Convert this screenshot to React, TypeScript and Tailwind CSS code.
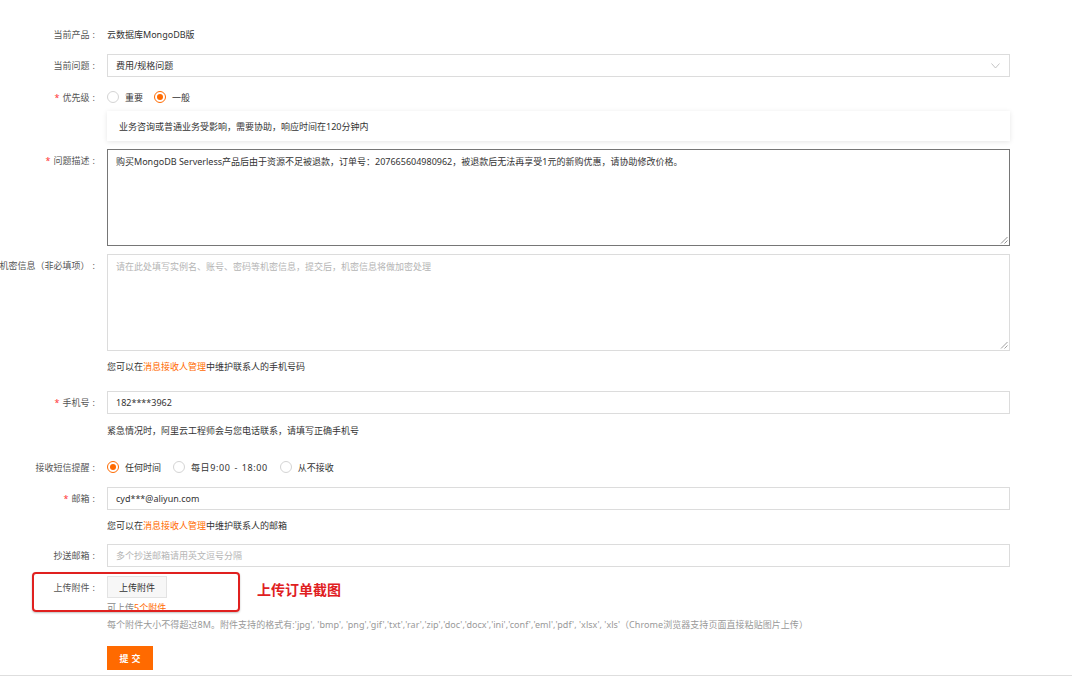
import React from "react";

const FONT = { fontFamily: '"Noto Sans", "Noto Sans CJK SC", sans-serif' };

function Label({ text, required, top }: { text: string; required?: boolean; top?: boolean }) {
  return (
    <div
      className={`w-[95px] shrink-0 flex justify-end whitespace-nowrap text-[9px] text-[#555] ${
        top ? "items-start pt-[6px] h-[23px]" : "items-center pt-[1px]"
      }`}
    >
      <div className="flex items-center whitespace-nowrap h-[12px]">
        {required && <span className="text-[#f33] mr-[3px]">*</span>}
        <span>{text}</span>
        <span className="ml-[3px]">:</span>
      </div>
    </div>
  );
}

function Radio({ checked, label, wide }: { checked?: boolean; label: string; wide?: boolean }) {
  return (
    <div className="flex items-center">
      <div
        className={`w-[12px] h-[12px] rounded-full border flex items-center justify-center bg-white ${
          checked ? "border-[#ff6a00]" : "border-[#d4d4d4]"
        }`}
      >
        {checked && <div className="w-[6px] h-[6px] rounded-full bg-[#ff6a00]" />}
      </div>
      <span
        className={`ml-[6px] pt-[1px] text-[9px] text-[#333] ${wide ? "tracking-[0.6px] [word-spacing:1px]" : ""}`}
      >
        {label}
      </span>
    </div>
  );
}

function Input({ value, placeholder }: { value?: string; placeholder?: string }) {
  return (
    <div className="flex-1 h-[23px] border border-[#dcdcdc] bg-white flex items-center px-[8px] pt-[1px] text-[9px]">
      {value ? (
        <span className="text-[#333]">{value}</span>
      ) : (
        <span className="text-[#b5b5b5]">{placeholder}</span>
      )}
    </div>
  );
}

function Spacer() {
  return <div className="w-[95px] shrink-0" />;
}

export default function App() {
  return (
    <div className="w-[1072px] h-[676px] bg-white overflow-hidden relative" style={FONT}>
      <div className="flex flex-col pt-[23px] pr-[62px] border-b border-[#dedede] h-[676px]">
        {/* 当前产品 */}
        <div className="flex h-[23px] gap-[12px]">
          <Label text="当前产品" />
          <div className="flex items-center pt-[1px] text-[9px] text-[#333]">云数据库MongoDB版</div>
        </div>

        {/* 当前问题 */}
        <div className="flex h-[23px] gap-[12px] mt-[8px]">
          <Label text="当前问题" />
          <div className="flex-1 h-[23px] border border-[#dcdcdc] bg-white flex items-center justify-between pl-[8px] pr-[9px] text-[9px] text-[#333]">
            <span className="pt-[1px]">费用/规格问题</span>
            <svg width="9" height="6" viewBox="0 0 9 6">
              <path d="M0.5 0.5 L4.5 5 L8.5 0.5" fill="none" stroke="#bdbdbd" strokeWidth="0.9" />
            </svg>
          </div>
        </div>

        {/* 优先级 */}
        <div className="flex h-[20px] gap-[11px] mt-[10px]">
          <Label text="优先级" required />
          <div className="flex items-center gap-[11px] ml-[1px]">
            <Radio label="重要" />
            <Radio checked label="一般" />
          </div>
        </div>

        {/* info box */}
        <div className="flex gap-[12px] mt-[4px]">
          <Spacer />
          <div className="flex-1 h-[30px] bg-white shadow-[0_1px_5px_rgba(0,0,0,0.10)] flex items-center pl-[12px] pt-[1px] text-[9px] text-[#333]">
            业务咨询或普通业务受影响，需要协助，响应时间在120分钟内
          </div>
        </div>

        {/* 问题描述 */}
        <div className="flex gap-[12px] mt-[8px]">
          <Label text="问题描述" required top />
          <div className="flex-1 h-[97px] border border-[#767676] bg-white relative px-[8px] pt-[5px] text-[9px] text-[#333] leading-[14px]">
            购买MongoDB Serverless产品后由于资源不足被退款，订单号：207665604980962，被退款后无法再享受1元的新购优惠，请协助修改价格。
            <svg width="8" height="8" viewBox="0 0 8 8" className="absolute right-[1px] bottom-[1px]">
              <path d="M7.5 1 L1 7.5 M7.5 4.5 L4.5 7.5" stroke="#777" strokeWidth="0.8" />
            </svg>
          </div>
        </div>

        {/* 机密信息 */}
        <div className="flex gap-[12px] mt-[8px]">
          <Label text="机密信息（非必填项）" top />
          <div className="flex-1 h-[97px] border border-[#dcdcdc] bg-white relative px-[8px] pt-[5px] text-[9px] text-[#b5b5b5] leading-[14px]">
            请在此处填写实例名、账号、密码等机密信息，提交后，机密信息将做加密处理
            <svg width="8" height="8" viewBox="0 0 8 8" className="absolute right-[1px] bottom-[1px]">
              <path d="M7.5 1 L1 7.5 M7.5 4.5 L4.5 7.5" stroke="#888" strokeWidth="0.8" />
            </svg>
          </div>
        </div>

        {/* hint */}
        <div className="flex gap-[12px] mt-[7px] h-[16px]">
          <Spacer />
          <div className="flex items-center pt-[1px] text-[9px] text-[#333]">
            您可以在<span className="text-[#ff6a00]">消息接收人管理</span>中维护联系人的手机号码
          </div>
        </div>

        {/* 手机号 */}
        <div className="flex gap-[12px] mt-[17px]">
          <Label text="手机号" required />
          <Input value="182****3962" />
        </div>

        <div className="flex gap-[12px] mt-[8px] h-[16px]">
          <Spacer />
          <div className="flex items-center pt-[1px] text-[9px] text-[#333]">
            紧急情况时，阿里云工程师会与您电话联系，请填写正确手机号
          </div>
        </div>

        {/* 接收短信提醒 */}
        <div className="flex h-[20px] gap-[12px] mt-[19px]">
          <Label text="接收短信提醒" />
          <div className="flex items-center gap-[12px]">
            <Radio checked label="任何时间" />
            <Radio label="每日9:00 - 18:00" wide />
            <Radio label="从不接收" />
          </div>
        </div>

        {/* 邮箱 */}
        <div className="flex gap-[12px] mt-[10px]">
          <Label text="邮箱" required />
          <Input value="cyd***@aliyun.com" />
        </div>

        <div className="flex gap-[12px] mt-[7px] h-[16px]">
          <Spacer />
          <div className="flex items-center pt-[1px] text-[9px] text-[#333]">
            您可以在<span className="text-[#ff6a00]">消息接收人管理</span>中维护联系人的邮箱
          </div>
        </div>

        {/* 抄送邮箱 */}
        <div className="flex gap-[12px] mt-[11px]">
          <Label text="抄送邮箱" />
          <Input placeholder="多个抄送邮箱请用英文逗号分隔" />
        </div>

        {/* 上传附件 */}
        <div className="flex gap-[12px] mt-[9px] h-[22px]">
          <Label text="上传附件" />
          <div className="w-[60px] h-[22px] border border-[#e3e3e3] bg-[#f7f7f7] flex items-center justify-center pt-[1px] text-[9px] text-[#333]">
            上传附件
          </div>
        </div>

        <div className="flex gap-[12px] mt-[1px] h-[16px]">
          <Spacer />
          <div className="flex items-center pt-[1px] text-[9px] text-[#888]">
            可上传<span className="text-[#ff6a00]">5个附件</span>
          </div>
        </div>

        <div className="flex gap-[12px] mt-[1px] h-[16px]">
          <Spacer />
          <div className="flex items-center pt-[1px] text-[9px] text-[#999] whitespace-nowrap tracking-[0.05px]">
            每个附件大小不得超过8M。附件支持的格式有:'jpg', 'bmp', 'png','gif','txt','rar','zip','doc','docx','ini','conf','eml','pdf', 'xlsx', 'xls'（Chrome浏览器支持页面直接粘贴图片上传）
          </div>
        </div>

        <div className="flex gap-[12px] mt-[14px]">
          <Spacer />
          <div className="w-[46px] h-[24px] bg-[#ff6a00] flex items-center justify-center pt-[1px] text-[9px] font-bold text-white tracking-[3px] pl-[3px]">
            提交
          </div>
        </div>
      </div>

      {/* annotation overlay */}
      <div className="absolute left-[32px] top-[572px] w-[208px] h-[40px] border-[2.5px] border-[#e0201f] rounded-[4px] shadow-[0_1px_2px_rgba(0,0,0,0.25)]" />
      <div className="absolute left-[257px] top-[581px] text-[14px] leading-[18px] font-bold text-[#e0201f]">
        上传订单截图
      </div>
    </div>
  );
}
